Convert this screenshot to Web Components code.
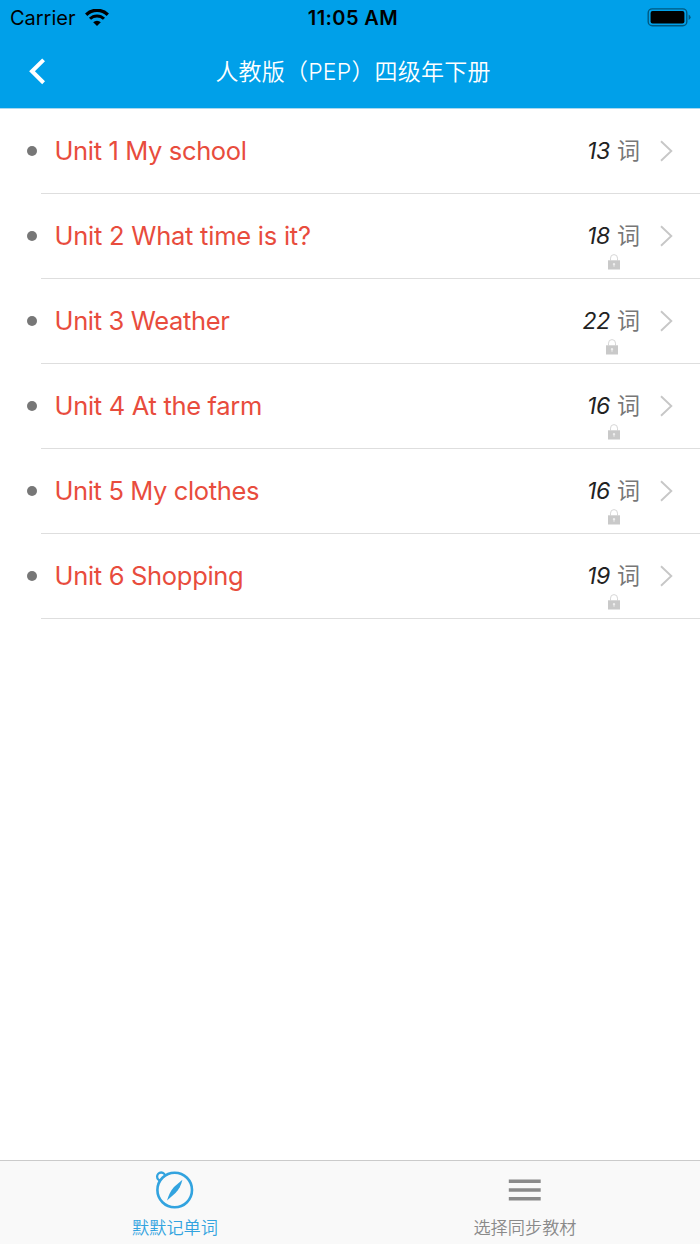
<!DOCTYPE html>
<html lang="zh-CN">
<head>
<meta charset="UTF-8">
<meta name="viewport" content="width=device-width, initial-scale=1.0">
<title>默默记单词</title>
<style>
    body{
        margin:0;
        height:1244px;
        display:flex;
        flex-direction:column;
        background:white;
        font-family:Inter, "Noto Sans CJK SC", sans-serif;
    }

    main{
        flex:1;
    }
</style>
</head>
<body>

<status-bar carrier="Carrier" time="11:05 AM"></status-bar>
<nav-bar>人教版（PEP）四级年下册</nav-bar>

<main>
    <unit-row words="13" spacing="-0.36px">Unit 1 My school</unit-row>
    <unit-row words="18" spacing="-0.24px" locked>Unit 2 What time is it?</unit-row>
    <unit-row words="22" spacing="-0.34px" locked>Unit 3 Weather</unit-row>
    <unit-row words="16" spacing="-0.31px" locked>Unit 4 At the farm</unit-row>
    <unit-row words="16" spacing="-0.37px" locked>Unit 5 My clothes</unit-row>
    <unit-row words="19" spacing="-0.31px" locked>Unit 6 Shopping</unit-row>
</main>

<tab-bar>
    <tab-item icon="compass" active>默默记单词</tab-item>
    <tab-item icon="menu">选择同步教材</tab-item>
</tab-bar>

<script>
class StatusBar extends HTMLElement {

    constructor() {
        super();
        this.shadow = this.attachShadow({mode: 'open'});
    }

    connectedCallback(){
        this.render();
    }

    render() {
        this.shadow.innerHTML =
        `
        <style>
            :host{
                display:grid;
                grid-template-columns:1fr auto 1fr;
                align-items:center;
                height:36px;
                padding:0 9px 0 10px;
                box-sizing:border-box;
                background:#00a0e9;
                color:black;
                font-size:20px;
                line-height:36px;
            }

            .carrier{
                display:flex;
                align-items:center;
                gap:9.5px;
                letter-spacing:-0.02px;
            }

            .time{
                font-weight:600;
                padding-left:5px;
                letter-spacing:0.4px;
            }

            .battery{
                justify-self:end;
            }

            svg{
                display:block;
            }
        </style>

        <div class="carrier">
            <span>${this.getAttribute('carrier')}</span>
            <svg width="24" height="18" viewBox="0 0 24 18">
                <path d="M1.2 5.7a15.4 15.4 0 0 1 21.6 0" fill="none" stroke="black" stroke-width="3.3"/>
                <path d="M5 9.8a9.9 9.9 0 0 1 14 0" fill="none" stroke="black" stroke-width="3"/>
                <path d="M8.2 13.2a5.4 5.4 0 0 1 7.6 0L12 16.9Z"/>
            </svg>
        </div>
        <span class="time">${this.getAttribute('time')}</span>
        <svg class="battery" width="44" height="20" viewBox="0 0 44 20">
            <rect x="1.2" y="0.9" width="38.6" height="16.8" rx="4" fill="none" stroke="#005880" stroke-width="1.4"/>
            <rect x="3.6" y="3.1" width="33.8" height="12.4" rx="2"/>
            <path d="M41.6 6.5q2 1 2 2.8t-2 2.8Z" fill="#005880"/>
        </svg>
        `;
    }
}

class NavBar extends HTMLElement {

    constructor() {
        super();
        this.shadow = this.attachShadow({mode: 'open'});
    }

    connectedCallback(){
        this.render();
    }

    render() {
        this.shadow.innerHTML =
        `
        <style>
            :host{
                display:grid;
                grid-template-columns:100px 1fr 100px;
                align-items:center;
                height:73px;
                padding-left:6px;
                box-sizing:border-box;
                background:#00a0e9;
                border-bottom:1px solid #a8d8ef;
                color:white;
            }

            svg{
                display:block;
                margin-left:22px;
            }

            .title{
                padding-bottom:5px;
                text-align:center;
                font-size:23px;
                font-weight:350;
                letter-spacing:0.2px;
                white-space:nowrap;
            }
        </style>

        <svg width="18" height="28" viewBox="0 0 18 28">
            <path d="M15.6 1.9 4 13.3 15.6 24.7" fill="none" stroke="white" stroke-width="4"/>
        </svg>
        <div class="title"><slot></slot></div>
        `;
    }
}

class UnitRow extends HTMLElement {

    constructor() {
        super();
        this.shadow = this.attachShadow({mode: 'open'});
    }

    connectedCallback(){
        this.render();
    }

    render() {
        const lock = `
            <svg class="lock" width="12" height="16" viewBox="0 0 12 16">
                <path d="M2.5 6.5V4.2a3.5 3.6 0 0 1 7 0V6.5" fill="none" stroke="#d6d6d6"/>
                <rect y="6.3" width="12" height="9.2" fill="#c9c9c9"/>
                <path d="M6 9a1.2 1.2 0 0 1 .5 2.3v1.5h-1v-1.5A1.2 1.2 0 0 1 6 9Z" fill="#eee"/>
            </svg>`;

        this.shadow.innerHTML =
        `
        <style>
            :host{
                display:flex;
                align-items:center;
                height:85px;
                padding-left:27px;
                box-sizing:border-box;
            }

            .dot{
                width:10px;
                height:10px;
                margin-bottom:2px;
                border-radius:50%;
                background:#777;
            }

            .content{
                display:flex;
                align-items:center;
                flex:1;
                height:100%;
                margin-left:4px;
                padding:0 27px 0 13.5px;
                box-sizing:border-box;
                border-bottom:1px solid #dedede;
            }

            .name{
                flex:1;
                color:#e84c3d;
                font-size:25.5px;
                line-height:32px;
                letter-spacing:${this.getAttribute('spacing') || 'normal'};
            }

            .meta{
                display:grid;
                grid-template-rows:1fr 32px 1fr;
                justify-items:center;
                height:100%;
                margin-right:20px;
                line-height:32px;
                color:#777;
                font-size:23px;
            }

            .count{
                display:flex;
                grid-row:2;
                gap:7px;
                white-space:nowrap;
            }

            .count em{
                color:#222;
                letter-spacing:-0.3px;
            }

            .lock{
                grid-row:3;
                margin:2px 0 0 1px;
            }
        </style>

        <span class="dot"></span>
        <div class="content">
            <span class="name"><slot></slot></span>
            <div class="meta">
                <span class="count"><em>${this.getAttribute('words')}</em><span>词</span></span>
                ${this.hasAttribute('locked') ? lock : ''}
            </div>
            <svg width="13" height="22" viewBox="0 0 13 22">
                <path d="M1 1.3 11.3 11 1 20.7" fill="none" stroke="#c7c7c7" stroke-width="1.9"/>
            </svg>
        </div>
        `;
    }
}

class TabBar extends HTMLElement {

    constructor() {
        super();
        this.shadow = this.attachShadow({mode: 'open'});
    }

    connectedCallback(){
        this.render();
    }

    render() {
        this.shadow.innerHTML =
        `
        <style>
            :host{
                display:flex;
                height:84px;
                box-sizing:border-box;
                background:#f9f9f9;
                border-top:1px solid #cbcbcb;
            }
        </style>

        <slot></slot>
        `;
    }
}

class TabItem extends HTMLElement {

    constructor() {
        super();
        this.shadow = this.attachShadow({mode: 'open'});
    }

    connectedCallback(){
        this.render();
    }

    render() {
        // the dial covers the inner part of the compass loop
        const icons = {
            compass: `
                <circle cx="6.2" cy="6.6" r="4.1" fill="none" stroke="currentColor" stroke-width="2.3"/>
                <circle cx="19.7" cy="20" r="17.3" fill="#f9f9f9" stroke="currentColor" stroke-width="2.6"/>
                <path d="M27.4 9.8C26.3 15 23.8 20 20.5 23L12 30.4C13.6 25.6 15.5 20.8 19 17Z" fill="currentColor"/>`,
            menu: `
                <path d="M3.8 11.2H35.7M3.8 20H35.7M3.8 28.8H35.7" fill="none" stroke="currentColor" stroke-width="3.6"/>`
        };

        this.shadow.innerHTML =
        `
        <style>
            :host{
                display:flex;
                flex:1;
                flex-direction:column;
                align-items:center;
                padding-top:9px;
                box-sizing:border-box;
                color:#8a8a8a;
                font-size:17.2px;
                font-weight:350;
                line-height:24px;
            }

            :host([active]){
                color:#32a3df;
            }

            svg{
                display:block;
                margin-bottom:6px;
            }
        </style>

        <svg width="40" height="40" viewBox="0 0 40 40">${icons[this.getAttribute('icon')]}</svg>
        <span><slot></slot></span>
        `;
    }
}

customElements.define('status-bar', StatusBar);
customElements.define('nav-bar', NavBar);
customElements.define('unit-row', UnitRow);
customElements.define('tab-bar', TabBar);
customElements.define('tab-item', TabItem);
</script>
</body>
</html>
